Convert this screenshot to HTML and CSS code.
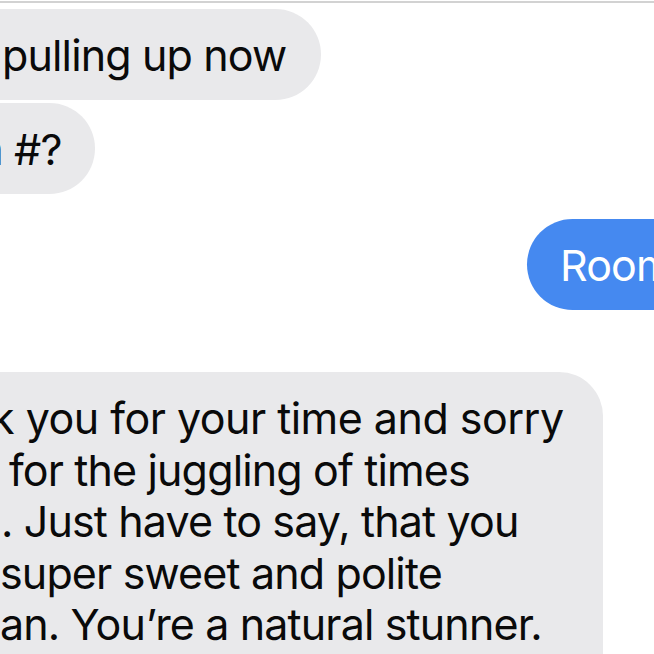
FILE: index.html
```html
<!DOCTYPE html>
<html>
<head>
<meta charset="utf-8">
<link rel="stylesheet" href="styles.css">
</head>
<body>
<div class="screen">
  <div class="topline"></div>
  <div class="thread">
    <div class="bubble in b1"><span class="txt">pulling up now</span></div>
    <div class="bubble in b2"><span class="txt"><span class="cut-m">m</span> #?</span></div>
    <div class="bubble out b3"><span class="txt">Room #</span></div>
    <div class="bubble in b4">
      <div class="line l1"><span class="cut-k">k</span> you for your time and sorry</div>
      <div class="line l2">for the juggling of times</div>
      <div class="line l3">. Just have to say, that you</div>
      <div class="line l4">super sweet and polite</div>
      <div class="line l5">an. You’re a natural stunner.</div>
    </div>
  </div>
</div>
</body>
</html>
```

FILE: styles.css
```css
html, body {
  margin: 0;
  padding: 0;
  background: #ffffff;
}
.screen {
  width: 654px;
  height: 654px;
  overflow: hidden;
  position: relative;
  background: #ffffff;
  font-family: "Inter", "Liberation Sans", sans-serif;
  font-size: 43px;
  color: #0a0a0a;
  letter-spacing: -0.02em;
}
.topline {
  height: 2px;
  margin-top: 1px;
  background: #d2d2d2;
}
.thread {
  display: flex;
  flex-direction: column;
  align-items: flex-start;
  padding-top: 6px;
}
.bubble {
  box-sizing: border-box;
  line-height: 52px;
  white-space: nowrap;
  overflow: hidden;
}
.in {
  background: #e9e9eb;
  border-radius: 0 46px 46px 0;
}
.out {
  background: #4589f0;
  color: #ffffff;
  align-self: flex-end;
  border-radius: 46px 0 0 46px;
}
.b1 {
  height: 91px;
  width: 321px;
  padding: 20px 0 0 2px;
}
.b2 {
  height: 91px;
  width: 95px;
  margin-top: 3px;
  padding: 20px 0 0 0;
}
.cut-m {
  display: inline-block;
  margin-left: -34px;
}
.b3 {
  height: 91px;
  width: 127px;
  margin-top: 25px;
  padding: 20px 0 0 33px;
}
.b4 {
  width: 603px;
  height: 300px;
  margin-top: 62px;
  padding: 20px 0 0 0;
  border-radius: 0 44px 0 0;
}
.line {
  height: 51.5px;
}
.l1 {
  letter-spacing: -0.012em;
}
.cut-k {
  display: inline-block;
  margin-left: -9px;
}
.l2 { padding-left: 9px; }
.l3 { padding-left: 1px; }
.l4 { padding-left: 0; }
.l5 { padding-left: 0; }
```
